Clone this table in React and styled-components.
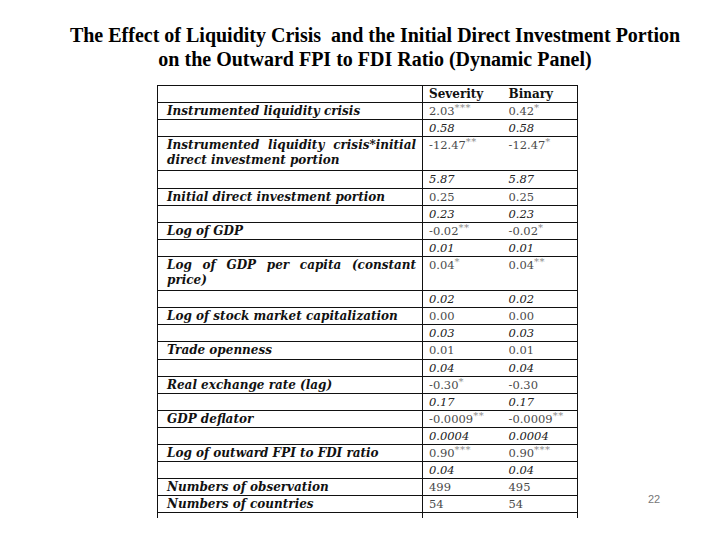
import React from 'react';
import styled, {createGlobalStyle} from 'styled-components';

const EstiloGlobal = createGlobalStyle`
    html, body {
        margin: 0;
        padding: 0;
        background: #fff;
    }
    body {
        width: 720px;
        height: 540px;
        overflow: hidden;
    }
`;

const filas = [
    {etiqueta: 'Instrumented liquidity crisis', sev: '2.03', sevE: '***', bin: '0.42', binE: '*'},
    {se: true, sev: '0.58', bin: '0.58'},
    {etiqueta: 'Instrumented liquidity crisis*initial direct investment portion', alta: true, sev: '-12.47', sevE: '**', bin: '-12.47', binE: '*'},
    {se: true, sev: '5.87', bin: '5.87'},
    {etiqueta: 'Initial direct investment portion', sev: '0.25', bin: '0.25'},
    {se: true, sev: '0.23', bin: '0.23'},
    {etiqueta: 'Log of GDP', sev: '-0.02', sevE: '**', bin: '-0.02', binE: '*'},
    {se: true, sev: '0.01', bin: '0.01'},
    {etiqueta: 'Log of GDP per capita (constant price)', alta: true, sev: '0.04', sevE: '*', bin: '0.04', binE: '**'},
    {se: true, sev: '0.02', bin: '0.02'},
    {etiqueta: 'Log of stock market capitalization', sev: '0.00', bin: '0.00'},
    {se: true, sev: '0.03', bin: '0.03'},
    {etiqueta: 'Trade openness', sev: '0.01', bin: '0.01'},
    {se: true, sev: '0.04', bin: '0.04'},
    {etiqueta: 'Real exchange rate (lag)', sev: '-0.30', sevE: '*', bin: '-0.30'},
    {se: true, sev: '0.17', bin: '0.17'},
    {etiqueta: 'GDP deflator', sev: '-0.0009', sevE: '**', bin: '-0.0009', binE: '**'},
    {se: true, sev: '0.0004', bin: '0.0004'},
    {etiqueta: 'Log of outward FPI to FDI ratio', sev: '0.90', sevE: '***', bin: '0.90', binE: '***'},
    {se: true, sev: '0.04', bin: '0.04'},
    {etiqueta: 'Numbers of observation', sev: '499', bin: '495'},
    {etiqueta: 'Numbers of countries', sev: '54', bin: '54'},
    {vacia: true}
];

const Valor = ({numero, estrellas}) => (
    <>
        {numero}
        {estrellas && <Estrellas>{estrellas}</Estrellas>}
    </>
);

const App = () => {
    return (
        <>
            <EstiloGlobal />
            <Diapositiva>
                <Titulo>
                    The Effect of Liquidity Crisis&nbsp; and the Initial Direct Investment Portion<br />
                    on the Outward FPI to FDI Ratio (Dynamic Panel)
                </Titulo>
                <Cuerpo>
                    <Recorte>
                        <Tabla>
                            <colgroup>
                                <col style={{width: '265px'}} />
                                <col style={{width: '80px'}} />
                                <col style={{width: '75px'}} />
                            </colgroup>
                            <thead>
                                <Fila>
                                    <Etiqueta />
                                    <Encabezado>Severity</Encabezado>
                                    <Encabezado ultima>Binary</Encabezado>
                                </Fila>
                            </thead>
                            <tbody>
                                {filas.map((fila, i) => (
                                    <Fila key={i} alta={fila.alta}>
                                        <Etiqueta justificada={fila.alta}>{fila.etiqueta}</Etiqueta>
                                        <Numero se={fila.se}>
                                            {!fila.vacia && <Valor numero={fila.sev} estrellas={fila.sevE} />}
                                        </Numero>
                                        <Numero se={fila.se} ultima>
                                            {!fila.vacia && <Valor numero={fila.bin} estrellas={fila.binE} />}
                                        </Numero>
                                    </Fila>
                                ))}
                            </tbody>
                        </Tabla>
                    </Recorte>
                    <NumeroPagina>22</NumeroPagina>
                </Cuerpo>
            </Diapositiva>
        </>
    );
}

const Diapositiva = styled.div`
    width: 720px;
    height: 540px;
    display: flex;
    flex-direction: column;
`;

const Titulo = styled.h1`
    margin: 0;
    padding-top: 23px;
    padding-left: 30px;
    height: 85px;
    flex-shrink: 0;
    box-sizing: border-box;
    font-family: "Liberation Serif", "Times New Roman", serif;
    font-weight: bold;
    font-size: 20px;
    line-height: 24px;
    text-align: center;
    color: #000;
`;

const Cuerpo = styled.div`
    display: flex;
    align-items: flex-end;
    padding-left: 157px;
`;

const Recorte = styled.div`
    height: 433px;
    overflow: hidden;
`;

const Tabla = styled.table`
    border-collapse: collapse;
    table-layout: fixed;
    width: 421px;
`;

const Fila = styled.tr`
    height: ${props => props.alta ? '34.2px' : '17.1px'};
`;

const Celda = styled.td`
    padding: 0;
    border-top: 1px solid #111;
    border-bottom: 1px solid #111;
    vertical-align: top;
    line-height: 16px;
`;

const Etiqueta = styled(Celda)`
    padding: 1px 6px 0 9px;
    border-left: 1px solid #111;
    border-right: 1px solid #111;
    font-family: "DejaVu Serif", serif;
    font-weight: bold;
    font-style: italic;
    font-size: 12px;
    color: #111;
    text-align: ${props => props.justificada ? 'justify' : 'left'};
    text-align-last: left;
    line-height: 15px;
`;

const Encabezado = styled(Celda)`
    padding: 1px 0 0 6px;
    font-family: "DejaVu Serif", serif;
    font-weight: bold;
    font-size: 12px;
    line-height: 15px;
    color: #111;
    border-right: ${props => props.ultima ? '1px solid #111' : 'none'};
`;

const Numero = styled(Celda)`
    padding: 1px 0 0 6px;
    font-family: "DejaVu Serif", serif;
    font-size: 11.5px;
    line-height: 15px;
    font-style: ${props => props.se ? 'italic' : 'normal'};
    color: ${props => props.se ? '#222' : '#4a4a4a'};
    border-right: ${props => props.ultima ? '1px solid #111' : 'none'};
    white-space: nowrap;
`;

const Estrellas = styled.sup`
    font-size: 10px;
    color: #8a8a8a;
    vertical-align: 4px;
    line-height: 0;
    letter-spacing: 0.5px;
`;

const NumeroPagina = styled.div`
    margin-left: 70px;
    margin-bottom: 13px;
    font-family: "Liberation Sans", Arial, sans-serif;
    font-size: 11px;
    color: #777;
`;

export default App;
